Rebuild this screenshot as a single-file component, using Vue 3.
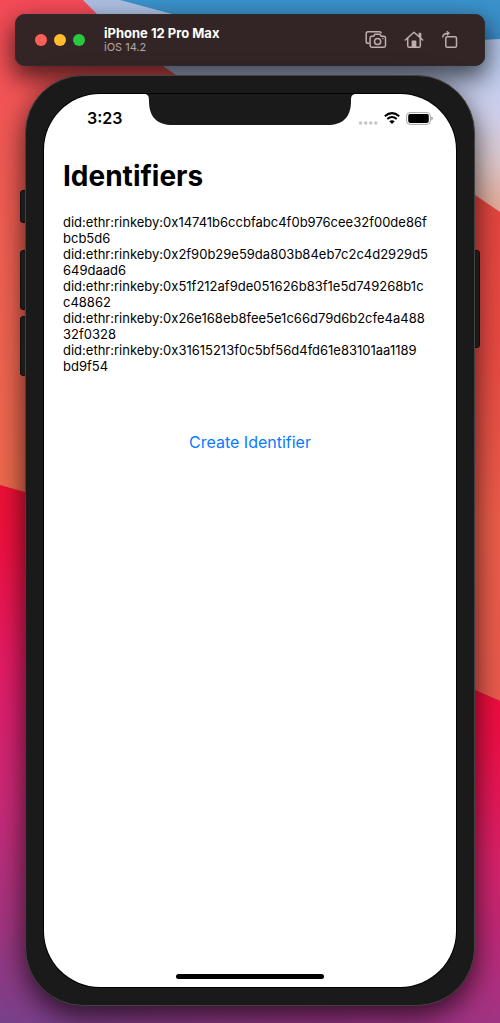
<script setup>
// Each identifier is held as two parts, with the preferred wrap point between them.
const identifiers = [
  ['did:ethr:rinkeby:0x14741b6ccbfabc4f0b976cee32f00de86f', 'bcb5d6'],
  ['did:ethr:rinkeby:0x2f90b29e59da803b84eb7c2c4d2929d5', '649daad6'],
  ['did:ethr:rinkeby:0x51f212af9de051626b83f1e5d749268b1c', 'c48862'],
  ['did:ethr:rinkeby:0x26e168eb8fee5e1c66d79d6b2cfe4a488', '32f0328'],
  ['did:ethr:rinkeby:0x31615213f0c5bf56d4fd61e83101aa1189', 'bd9f54'],
]
</script>

<template>
  <div class="desktop">
    <svg class="wallpaper" viewBox="0 0 500 1023" preserveAspectRatio="none" aria-hidden="true">
      <defs>
        <linearGradient id="sky" x1="0" y1="0" x2="0" y2="1">
          <stop offset="0" stop-color="#3a93cb" />
          <stop offset="1" stop-color="#3b8cc8" />
        </linearGradient>
        <linearGradient id="haze" gradientUnits="userSpaceOnUse" x1="0" y1="0" x2="0" y2="215">
          <stop offset="0" stop-color="#adbfe2" />
          <stop offset="0.3" stop-color="#bccbee" />
          <stop offset="0.55" stop-color="#d0d0ea" />
          <stop offset="0.75" stop-color="#ddc8cc" />
          <stop offset="1" stop-color="#e5a68f" />
        </linearGradient>
        <linearGradient id="coral" gradientUnits="userSpaceOnUse" x1="0" y1="0" x2="0" y2="500">
          <stop offset="0" stop-color="#f54a58" />
          <stop offset="0.3" stop-color="#f05a54" />
          <stop offset="1" stop-color="#ee6b4d" />
        </linearGradient>
        <linearGradient id="ember" gradientUnits="userSpaceOnUse" x1="0" y1="195" x2="0" y2="700">
          <stop offset="0" stop-color="#e5453f" />
          <stop offset="0.3" stop-color="#e84a42" />
          <stop offset="0.65" stop-color="#ec5d4a" />
          <stop offset="1" stop-color="#ea5a4c" />
        </linearGradient>
        <linearGradient id="dusk" gradientUnits="userSpaceOnUse" x1="60" y1="485" x2="0" y2="1023">
          <stop offset="0" stop-color="#ee1035" />
          <stop offset="0.12" stop-color="#ee1140" />
          <stop offset="0.35" stop-color="#e31c67" />
          <stop offset="0.6" stop-color="#c92a78" />
          <stop offset="0.8" stop-color="#a5347e" />
          <stop offset="1" stop-color="#78408a" />
        </linearGradient>
        <linearGradient id="duskRight" gradientUnits="userSpaceOnUse" x1="0" y1="690" x2="0" y2="1023">
          <stop offset="0" stop-color="#ee0c3c" />
          <stop offset="0.2" stop-color="#ec114b" />
          <stop offset="0.5" stop-color="#d82168" />
          <stop offset="0.75" stop-color="#bd2a78" />
          <stop offset="1" stop-color="#9f3484" />
        </linearGradient>
        <linearGradient id="sweep" x1="0" y1="0" x2="1" y2="0">
          <stop offset="0.1" stop-color="#fff" stop-opacity="0" />
          <stop offset="0.9" stop-color="#fff" />
        </linearGradient>
        <mask id="rightSide"><rect width="500" height="1023" fill="url(#sweep)" /></mask>
      </defs>
      <rect width="500" height="1023" fill="url(#haze)" />
      <path d="M120 0H500V39Q350 49 172 14Z" fill="url(#sky)" />
      <path d="M0 0H83L97 14L163 66L176 75L300 150V560H0Z" fill="url(#coral)" />
      <path d="M300 100L475 195L500 212V720H300Z" fill="url(#ember)" />
      <path d="M0 485L25 492L475 690L500 701V1023H0Z" fill="url(#dusk)" />
      <path d="M0 485L25 492L475 690L500 701V1023H0Z" fill="url(#duskRight)" mask="url(#rightSide)" />
    </svg>

    <header class="toolbar">
      <div class="lights">
        <button class="light red" type="button" aria-label="Close"></button>
        <button class="light yellow" type="button" aria-label="Minimize"></button>
        <button class="light green" type="button" aria-label="Zoom"></button>
      </div>
      <div class="device">
        <strong class="device-name">iPhone 12 Pro Max</strong>
        <span class="device-os">iOS 14.2</span>
      </div>
      <div class="actions">
        <button class="action" type="button" aria-label="Screenshot">
          <svg width="22" height="20" viewBox="0 0 22 20" fill="none" stroke="currentColor" stroke-width="1.5" stroke-linejoin="round">
            <path d="M4.5 13.3H3Q1.2 13.3 1.2 11.5V3.5Q1.2 1.7 3 1.7H14.2Q16 1.7 16.4 3.4" />
            <path d="M6.8 6.2H8.6L10 4.3H14.8L16.2 6.2H18.8Q20.5 6.2 20.5 7.9V15.6Q20.5 17.3 18.8 17.3H6.8Q5.1 17.3 5.1 15.6V7.9Q5.1 6.2 6.8 6.2Z" />
            <circle cx="12.6" cy="11.5" r="3.1" />
            <path d="M17.3 8.6H18.5" />
          </svg>
        </button>
        <button class="action" type="button" aria-label="Home">
          <svg width="20" height="20" viewBox="0 0 20 20" fill="none" stroke="currentColor" stroke-width="1.5" stroke-linejoin="round" stroke-linecap="round">
            <path d="M1.3 10L10 2.2L18.7 10" />
            <path d="M3.7 8.3V15.8Q3.7 17.3 5.2 17.3H14.8Q16.3 17.3 16.3 15.8V8.3" />
            <path d="M15.3 6.4V3.4H16.6V7.8" />
            <path d="M8.4 17V11.3H11.6V17Z" fill="currentColor" />
          </svg>
        </button>
        <button class="action" type="button" aria-label="Rotate">
          <svg width="18" height="20" viewBox="0 0 18 20" fill="none" stroke="currentColor" stroke-width="1.5" stroke-linejoin="round">
            <rect x="4.8" y="6.8" width="10.7" height="10.5" rx="1.4" />
            <path d="M1.7 7.6C1.7 4.6 3.2 3.2 7.6 3.2" />
            <path d="M5.8 1.2L8 3.2L5.8 5.2" />
          </svg>
        </button>
      </div>
    </header>

    <main class="phone">
      <i class="key mute"></i>
      <i class="key volume-up"></i>
      <i class="key volume-down"></i>
      <i class="key power"></i>
      <div class="screen">
        <svg class="notch" width="214" height="32" viewBox="0 0 214 32" aria-hidden="true">
          <path d="M1 0H213C209 0 208 2 208 7C208 23 200 31 184 31H30C14 31 6 23 6 7C6 2 5 0 1 0Z" fill="#1a1a1a" />
        </svg>
        <div class="status">
          <span class="time">3:23</span>
          <div class="indicators">
            <svg class="signal" width="20" height="6" viewBox="0 0 20 6" fill="#c6c6c6" aria-hidden="true">
              <circle cx="2.5" cy="3" r="1.8" /><circle cx="7.6" cy="3" r="1.8" />
              <circle cx="12.7" cy="3" r="1.8" /><circle cx="17.8" cy="3" r="1.8" />
            </svg>
            <svg width="16" height="12" viewBox="0 0 16 12" fill="none" stroke="#000" stroke-width="2" aria-hidden="true">
              <path d="M0.8 4.3Q8 -2 15.2 4.3" />
              <path d="M3.3 7Q8 3 12.7 7" />
              <path d="M8 11.9L5.3 9.2Q8 7.1 10.7 9.2Z" fill="#000" stroke="none" />
            </svg>
            <svg width="27" height="13" viewBox="0 0 27 13" aria-hidden="true">
              <rect x="0.6" y="0.6" width="23.8" height="11.8" rx="3.4" fill="none" stroke="#a6a6a6" />
              <rect x="2.2" y="2.1" width="20.6" height="8.8" rx="1.8" fill="#000" />
              <path d="M25.4 4.6Q26.8 5.2 26.8 6.5T25.4 8.4Z" fill="#8c8c8c" />
            </svg>
          </div>
        </div>
        <h1 class="title">Identifiers</h1>
        <ul class="list">
          <li v-for="[head, tail] in identifiers" :key="head">{{ head }}<wbr />{{ tail }}</li>
        </ul>
        <button class="create" type="button">Create Identifier</button>
        <div class="home-bar"></div>
      </div>
    </main>
  </div>
</template>

<style>
body {
  margin: 0;
}
</style>

<style scoped>
.desktop {
  position: relative;
  isolation: isolate;
  overflow: hidden;
  box-sizing: border-box;
  min-height: 100vh;
  padding: 14px 15px 17px;
  display: flex;
  flex-direction: column;
  gap: 9px;
  font-family: Inter, "Liberation Sans", sans-serif;
}
.wallpaper {
  position: absolute;
  inset: 0;
  z-index: -1;
  width: 100%;
  height: 100%;
}
button {
  margin: 0;
  padding: 0;
  border: 0;
  background: none;
  font: inherit;
}
.toolbar {
  display: flex;
  align-items: center;
  box-sizing: border-box;
  height: 52px;
  padding: 0 26px 0 20px;
  border-radius: 10px;
  background: #332525;
  box-shadow: inset 0 0 0 1px #2f2c2e, 0 10px 24px 2px rgba(0, 0, 0, 0.65);
}
.lights {
  display: flex;
  gap: 7px;
}
.light {
  width: 12px;
  height: 12px;
  border-radius: 50%;
}
.red { background: #ff5f57; }
.yellow { background: #febc2e; }
.green { background: #28c840; }
.device {
  display: flex;
  flex-direction: column;
  margin-left: 19px;
}
.device-name {
  font-size: 13px;
  line-height: 15px;
  font-weight: 700;
  color: #fff;
}
.device-os {
  font-size: 11px;
  line-height: 13px;
  color: #b5a8a8;
}
.actions {
  display: flex;
  gap: 17px;
  margin-left: auto;
}
.action {
  display: flex;
  color: #bfaeae;
}
.phone {
  position: relative;
  flex: 1;
  display: flex;
  box-sizing: border-box;
  margin: 0 10px;
  padding: 18px;
  border: 1px solid #424242;
  border-radius: 58px;
  background: #1a1a1a;
  box-shadow: 0 10px 28px rgba(0, 0, 0, 0.7);
}
.key {
  position: absolute;
  z-index: -1;
  left: -6px;
  width: 8px;
  box-sizing: border-box;
  border: 1px solid #141414;
  border-radius: 3px;
  background: #292929;
}
.mute { top: 114px; height: 33px; }
.volume-up { top: 174px; height: 60px; }
.volume-down { top: 240px; height: 60px; }
.power { top: 174px; height: 98px; left: auto; right: -6px; }
.screen {
  position: relative;
  flex: 1;
  display: flex;
  flex-direction: column;
  box-sizing: border-box;
  padding: 0 19px 8px;
  border-radius: 56px;
  background: #fff;
  box-shadow: 0 0 0 1px #000;
}
.notch {
  position: absolute;
  top: 0;
  left: 50%;
  margin-left: -107px;
}
.status {
  display: flex;
  justify-content: space-between;
  align-items: center;
  height: 48px;
  padding: 0 4px 0 24px;
}
.time {
  font-size: 16px;
  line-height: 20px;
  font-weight: 600;
}
.indicators {
  display: flex;
  align-items: center;
  gap: 6px;
}
.signal {
  align-self: flex-end;
  margin-bottom: -1px;
}
.title {
  margin: 16px 0 0;
  font-size: 28px;
  line-height: 36px;
  font-weight: 700;
}
.list {
  margin: 20px 0 0;
  padding: 0;
  list-style: none;
  font-size: 13px;
  line-height: 16px;
}
.create {
  align-self: center;
  margin-top: 57px;
  font-size: 16px;
  line-height: 22px;
  color: #0a7aff;
}
.home-bar {
  align-self: center;
  width: 148px;
  height: 5px;
  margin-top: auto;
  border-radius: 3px;
  background: #000;
}
</style>
